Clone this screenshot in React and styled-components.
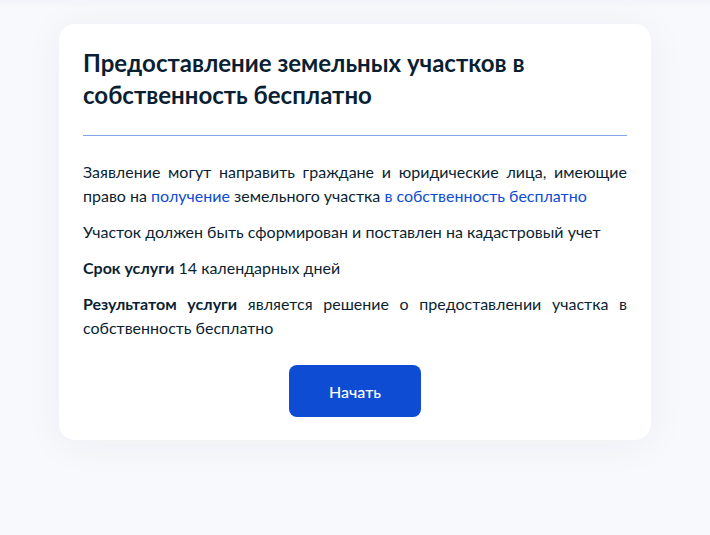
import styled, { createGlobalStyle } from "styled-components";

const GlobalStyle = createGlobalStyle`
    html, body {
        margin: 0;
        padding: 0;
        background: #f8f9fd;
        font-family: Lato, "Noto Sans", sans-serif;
        color: #0b1f33;
    }
`

const Page = styled.div`
    min-height: 535px;
    padding-top: 24px;
    box-sizing: border-box;
    background: linear-gradient(#f2f4f9 0px, #f8f9fd 8px);
`
const Card = styled.section`
    width: 592px;
    margin-left: 59px;
    box-sizing: border-box;
    padding: 23px 24px 23px;
    background: #fff;
    border-radius: 16px;
    box-shadow: 0 4px 40px rgba(11, 31, 51, 0.05);
`
const Title = styled.h1`
    margin: 0;
    font-size: 24px;
    line-height: 32px;
    font-weight: 700;
    color: #0b1f33;
`
const Divider = styled.div`
    margin: 24px 0 24px;
    height: 1px;
    background: #86a4ec;
`
const Text = styled.p`
    margin: 0 0 12px;
    font-size: 16px;
    line-height: 24px;
    text-align: justify;
    &:last-of-type {
        margin-bottom: 0;
    }
`
const Link = styled.a`
    color: #0d4cd3;
    text-decoration: none;
    cursor: pointer;
`
const Actions = styled.div`
    display: flex;
    justify-content: center;
    margin-top: 25px;
`
const Button = styled.button`
    width: 132px;
    height: 52px;
    border: 0;
    border-radius: 8px;
    background: #0d4cd3;
    color: #fff;
    font-family: Lato, "Noto Sans", sans-serif;
    font-size: 16px;
    font-weight: 500;
    cursor: pointer;
    &:hover {
        background: #0b42b8;
    }
`

export default function App() {
    return (
        <Page>
            <GlobalStyle />
            <Card>
                <Title>Предоставление земельных участков в собственность бесплатно</Title>
                <Divider />
                <Text>
                    Заявление могут направить граждане и юридические лица, имеющие
                    право на <Link>получение</Link> земельного участка <Link>в собственность бесплатно</Link>
                </Text>
                <Text>Участок должен быть сформирован и поставлен на кадастровый учет</Text>
                <Text><b>Срок услуги</b> 14 календарных дней</Text>
                <Text>
                    <b>Результатом услуги</b> является решение о предоставлении участка в
                    собственность бесплатно
                </Text>
                <Actions>
                    <Button>Начать</Button>
                </Actions>
            </Card>
        </Page>
    )
}
